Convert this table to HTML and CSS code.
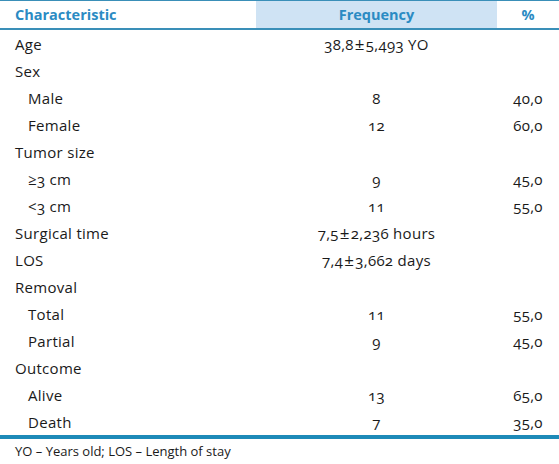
FILE: index.html
```html
<!doctype html>
<html lang="en">
<head>
    <meta charset="utf-8">
    <title>Patient characteristics</title>
    <link rel="stylesheet" href="styles.css">
</head>
<body>
    <table class="data-table">
        <thead>
            <tr>
                <th class="col-char">Characteristic</th>
                <th class="col-freq">Frequency</th>
                <th class="col-pct">%</th>
            </tr>
        </thead>
        <tbody>
            <tr><td>Age</td><td class="num">38,8<span class="pm">±</span>5,493 YO</td><td class="num"></td></tr>
            <tr><td>Sex</td><td></td><td></td></tr>
            <tr><td class="sub">Male</td><td class="num">8</td><td class="num">40,0</td></tr>
            <tr><td class="sub">Female</td><td class="num">12</td><td class="num">60,0</td></tr>
            <tr><td>Tumor size</td><td></td><td></td></tr>
            <tr><td class="sub">≥3 cm</td><td class="num">9</td><td class="num">45,0</td></tr>
            <tr><td class="sub">&lt;3 cm</td><td class="num">11</td><td class="num">55,0</td></tr>
            <tr><td>Surgical time</td><td class="num">7,5<span class="pm">±</span>2,236 hours</td><td></td></tr>
            <tr><td>LOS</td><td class="num">7,4<span class="pm">±</span>3,662 days</td><td></td></tr>
            <tr><td>Removal</td><td></td><td></td></tr>
            <tr><td class="sub">Total</td><td class="num">11</td><td class="num">55,0</td></tr>
            <tr><td class="sub">Partial</td><td class="num">9</td><td class="num">45,0</td></tr>
            <tr><td>Outcome</td><td></td><td></td></tr>
            <tr><td class="sub">Alive</td><td class="num">13</td><td class="num">65,0</td></tr>
            <tr><td class="sub">Death</td><td class="num">7</td><td class="num">35,0</td></tr>
        </tbody>
    </table>
    <p class="footnote">YO – Years old; LOS – Length of stay</p>
</body>
</html>
```
FILE: styles.css
```css
body {
    margin: 0;
    background: #fff;
    font-family: "Open Sans", "Noto Sans", sans-serif;
    color: #1a1a1a;
    font-feature-settings: "onum" 1;
}
.data-table {
    width: 559px;
    border-collapse: collapse;
    font-size: 15px;
    letter-spacing: 0.3px;
}
.data-table th {
    height: 27px;
    padding: 0;
    font-size: 14.5px;
    letter-spacing: 0;
    color: #2b8bc3;
    font-weight: bold;
    border-top: 1px solid #3a8fb8;
    border-bottom: 2px solid #3a8fb8;
}
.data-table th.col-char {
    width: 256px;
    text-align: left;
    padding-left: 15px;
    box-sizing: border-box;
}
.data-table th.col-freq {
    width: 241px;
    background: #cfe3f4;
    text-align: center;
}
.data-table th.col-pct {
    text-align: center;
}
.data-table td {
    height: 27px;
    padding: 0 0 0 15px;
}
.data-table td.sub {
    padding-left: 28px;
}
.data-table td.num {
    text-align: center;
    padding: 0;
}
.pm {
    font-size: 17px;
    margin: 0 1px;
}
.data-table tbody tr:last-child td {
    border-bottom: 4px solid #1d8ab8;
}
.footnote {
    margin: 3px 0 0 15px;
    font-size: 13px;
}
```
